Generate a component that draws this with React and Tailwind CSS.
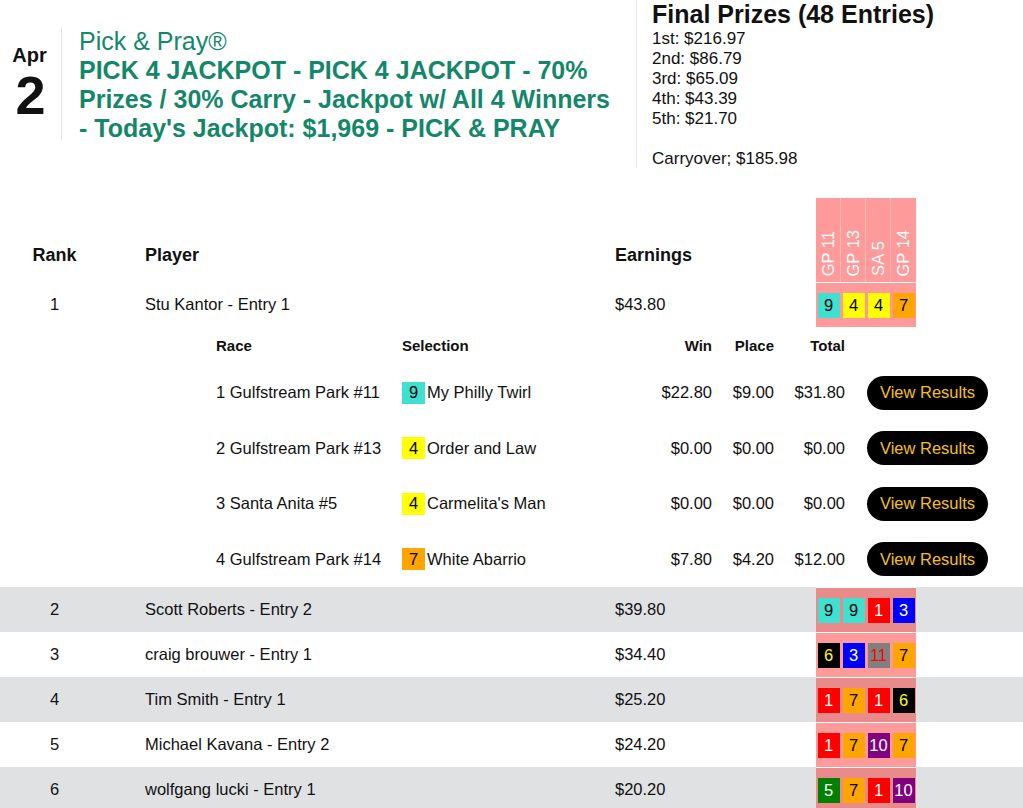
const SADDLE = {
  1: 'bg-[#ff0000] text-white',
  3: 'bg-[#0000ff] text-white',
  4: 'bg-[#ffff00] text-black',
  5: 'bg-[#008000] text-white',
  6: 'bg-black text-[#ffff00]',
  7: 'bg-[#ffa500] text-black',
  9: 'bg-[#40e0d0] text-black',
  10: 'bg-[#800080] text-white',
  11: 'bg-[#808080] text-[#ff0000]',
};

const races = ['GP 11', 'GP 13', 'SA 5', 'GP 14'];

const details = [
  { race: '1 Gulfstream Park #11', num: 9, horse: 'My Philly Twirl', win: '$22.80', place: '$9.00', total: '$31.80' },
  { race: '2 Gulfstream Park #13', num: 4, horse: 'Order and Law', win: '$0.00', place: '$0.00', total: '$0.00' },
  { race: '3 Santa Anita #5', num: 4, horse: "Carmelita's Man", win: '$0.00', place: '$0.00', total: '$0.00' },
  { race: '4 Gulfstream Park #14', num: 7, horse: 'White Abarrio', win: '$7.80', place: '$4.20', total: '$12.00' },
];

const others = [
  { rank: 2, player: 'Scott Roberts - Entry 2', earnings: '$39.80', picks: [9, 9, 1, 3] },
  { rank: 3, player: 'craig brouwer - Entry 1', earnings: '$34.40', picks: [6, 3, 11, 7] },
  { rank: 4, player: 'Tim Smith - Entry 1', earnings: '$25.20', picks: [1, 7, 1, 6] },
  { rank: 5, player: 'Michael Kavana - Entry 2', earnings: '$24.20', picks: [1, 7, 10, 7] },
  { rank: 6, player: 'wolfgang lucki - Entry 1', earnings: '$20.20', picks: [5, 7, 1, 10] },
];

const Picks = ({ picks, dark }) => (
  <div className={`flex items-center border-t border-white ${dark ? 'bg-[#e98b8b]' : 'bg-[#ff9a9a]'}`}>
    {picks.map((n, i) => (
      <div key={i} className="w-[25px] flex justify-center">
        <span className={`w-[22px] h-[25px] flex items-center justify-center ${SADDLE[n]}`}>{n}</span>
      </div>
    ))}
  </div>
);

const PlayerRow = ({ rank, player, earnings, picks, dark }) => (
  <div className={`grid grid-cols-[109px_506px_201px_100px_1fr] h-[45px] ${dark ? 'bg-[#e0e1e3]' : 'bg-white'}`}>
    <div className="flex items-center justify-center">{rank}</div>
    <div className="flex items-center pl-[36px]">{player}</div>
    <div className="flex items-center">{earnings}</div>
    <Picks picks={picks} dark={dark} />
    <div />
  </div>
);

export default function App() {
  return (
    <div className="min-h-screen bg-white text-[#111] text-[16.5px] font-['Liberation_Sans',Arial,sans-serif] overflow-hidden">
      {/* Header */}
      <div className="flex h-[168px]">
        <div className="w-[636px] flex items-start pt-[27px]">
          <div className="w-[62px] h-[113px] border-r border-[#e6e6e6] flex flex-col items-center justify-center">
            <div className="text-[20px] font-bold leading-[23px] -ml-[2px]">Apr</div>
            <div className="text-[54px] font-bold leading-[56px]">2</div>
          </div>
          <div className="w-[557px] pl-[17px] text-[25px] leading-[29px] text-[#14876a]">
            <div>Pick &amp; Pray®</div>
            <div className="font-bold">
              PICK 4 JACKPOT - PICK 4 JACKPOT - 70% Prizes / 30% Carry - Jackpot w/ All 4 Winners - Today's Jackpot: $1,969 - PICK &amp; PRAY
            </div>
          </div>
        </div>
        <div className="border-l border-[#e6e6e6] pl-[15px]">
          <div className="text-[25px] font-bold leading-[29px]">Final Prizes (48 Entries)</div>
          <div className="text-[17px] leading-[20px]">
            <div>1st: $216.97</div>
            <div>2nd: $86.79</div>
            <div>3rd: $65.09</div>
            <div>4th: $43.39</div>
            <div>5th: $21.70</div>
            <div className="h-[20px]" />
            <div>Carryover; $185.98</div>
          </div>
        </div>
      </div>

      {/* Table header */}
      <div className="grid grid-cols-[109px_506px_201px_100px_1fr] h-[84px] mt-[30px] text-[18px] font-bold leading-[21px]">
        <div className="flex items-end justify-center pb-[16px]">Rank</div>
        <div className="flex items-end pl-[36px] pb-[16px]">Player</div>
        <div className="flex items-end pb-[16px]">Earnings</div>
        <div className="flex bg-[#ff9a9a] font-normal text-white text-[16.5px]">
          {races.map((r, i) => (
            <div key={r} className={`w-[25px] flex flex-col justify-end items-center pb-[6px] ${i < 3 ? 'border-r border-[#ffb9b9]' : ''}`}>
              <span className="[writing-mode:vertical-rl] rotate-180 whitespace-nowrap leading-[25px]">{r}</span>
            </div>
          ))}
        </div>
        <div />
      </div>

      <PlayerRow rank={1} player="Stu Kantor - Entry 1" earnings="$43.80" picks={[9, 4, 4, 7]} />

      {/* Entry details */}
      <div className="pl-[216px]">
        <div className="grid grid-cols-[186px_248px_62px_62px_71px_1fr] h-[38px] items-center text-[15px] font-bold">
          <div>Race</div>
          <div>Selection</div>
          <div className="text-right">Win</div>
          <div className="text-right">Place</div>
          <div className="text-right">Total</div>
          <div />
        </div>
        {details.map((d) => (
          <div key={d.race} className="grid grid-cols-[186px_248px_62px_62px_71px_1fr] h-[55.5px] items-center">
            <div>{d.race}</div>
            <div className="flex items-center">
              <span className={`w-[23px] h-[22px] mr-[2px] flex items-center justify-center ${SADDLE[d.num]}`}>{d.num}</span>
              {d.horse}
            </div>
            <div className="text-right">{d.win}</div>
            <div className="text-right">{d.place}</div>
            <div className="text-right">{d.total}</div>
            <div className="pl-[22px]">
              <button className="w-[121px] h-[34px] rounded-full bg-black text-[#f5c116]">View Results</button>
            </div>
          </div>
        ))}
      </div>

      {others.map((o, i) => (
        <PlayerRow key={o.rank} {...o} dark={i % 2 === 0} />
      ))}
    </div>
  );
}
